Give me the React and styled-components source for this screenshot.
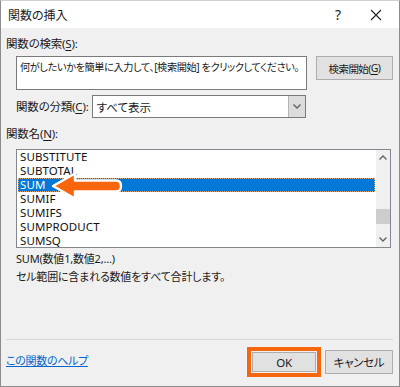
import React from "react";
import styled, { createGlobalStyle } from "styled-components";

const GlobalStyle = createGlobalStyle`
  html, body {
    margin: 0;
    padding: 0;
    background: #ffffff;
  }
  body {
    font-family: "Noto Sans", "Noto Sans CJK JP", sans-serif;
    font-size: 12px;
    color: #1a1a1a;
  }
`;

const ORANGE = "#f7650d";

const Dialog = styled.div`
  width: 400px;
  height: 387px;
  box-sizing: border-box;
  border: 1px solid #8c8c8c;
  border-top-color: #d0d0d0;
  background: #f0f0f0;
  display: flex;
  flex-direction: column;
  font-feature-settings: "palt";
`;

const TitleBar = styled.div`
  height: 27px;
  background: #ffffff;
  display: flex;
  align-items: center;
  padding-left: 7px;
`;

const Title = styled.div`
  flex: 1;
  font-size: 12px;
  color: #1a1a1a;
`;

const TitleButton = styled.div`
  width: ${({ wide }) => (wide ? "46px" : "30px")};
  display: flex;
  justify-content: center;
  align-items: center;
  font-size: 14px;
  color: #222;
`;

const Body = styled.div`
  flex: 1;
  display: flex;
  flex-direction: column;
  padding: 8px 6px 0 5px;
`;

const Label = styled.div`
  font-size: 11.5px;
  height: 16px;
  line-height: 16px;
  letter-spacing: -0.2px;
  white-space: nowrap;
  u {
    text-underline-offset: 2px;
  }
`;

const Indented = styled.div`
  padding-left: 10px;
`;

const SearchRow = styled(Indented)`
  display: flex;
  align-items: flex-start;
  gap: 9px;
  margin-top: 4px;
`;

const SearchBox = styled.div`
  width: 291px;
  height: 34px;
  box-sizing: border-box;
  border: 1px solid #7a7a7a;
  background: #fff;
  padding: 2px 3px;
  font-size: 10.2px;
  line-height: 16px;
  letter-spacing: -0.4px;
  white-space: nowrap;
`;

const Button = styled.div`
  width: ${({ w }) => w}px;
  height: ${({ h }) => h || 24}px;
  box-sizing: border-box;
  border: 1px solid #adadad;
  background: #e1e1e1;
  display: flex;
  align-items: center;
  justify-content: center;
  font-size: ${({ fs }) => fs || 11.5}px;
  letter-spacing: ${({ ls }) => (ls == null ? -0.3 : ls)}px;
  white-space: nowrap;
  color: #1a1a1a;
  u {
    text-underline-offset: 2px;
  }
`;

const CategoryRow = styled(Indented)`
  display: flex;
  align-items: center;
  gap: 3px;
  margin-top: 5px;
`;

const Select = styled.div`
  width: 214px;
  height: 23px;
  box-sizing: border-box;
  border: 1px solid #7a7a7a;
  background: #fff;
  display: flex;
  align-items: stretch;
`;

const SelectValue = styled.div`
  flex: 1;
  display: flex;
  align-items: center;
  padding-left: 4px;
  font-size: 11.5px;
`;

const SelectArrow = styled.div`
  width: 16px;
  background: #dcdcdc;
  border-left: 1px solid #b5b5b5;
  display: flex;
  align-items: center;
  justify-content: center;
`;

const NameLabel = styled(Label)`
  margin-top: 8px;
`;

const ListWrap = styled.div`
  position: relative;
  margin: 7px 0 0 10px;
  width: 375px;
  height: 99px;
  box-sizing: border-box;
  border: 1px solid #828790;
  background: #fff;
  display: flex;
`;

const Items = styled.ul`
  list-style: none;
  margin: 0;
  padding: 0 1px;
  flex: 1;
`;

const Item = styled.li`
  height: 14px;
  line-height: 14px;
  padding-left: 2px;
  font-size: 11.5px;
  letter-spacing: 0.1px;
  background: ${({ selected }) => (selected ? "#0078d7" : "transparent")};
  color: ${({ selected }) => (selected ? "#ffffff" : "#111")};
  outline: ${({ selected }) => (selected ? "1px dotted #d6a77a" : "none")};
  outline-offset: -1px;
`;

const ScrollBar = styled.div`
  width: 14px;
  background: #f0f0f0;
  display: flex;
  flex-direction: column;
  align-items: stretch;
`;

const ScrollArrow = styled.div`
  height: 15px;
  display: flex;
  align-items: center;
  justify-content: center;
`;

const ScrollTrack = styled.div`
  flex: 1;
  display: flex;
  flex-direction: column;
  justify-content: flex-end;
  padding-bottom: 8px;
`;

const Thumb = styled.div`
  height: 15px;
  background: #cdcdcd;
`;

const Pointer = styled.svg`
  position: absolute;
  left: 33px;
  top: 20px;
`;

const Description = styled(Indented)`
  margin-top: 2px;
  font-size: 11px;
  line-height: 18px;
  letter-spacing: -0.2px;
`;

const Spacer = styled.div`
  flex: 1;
`;

const Separator = styled.div`
  height: 1px;
  background: #d7d7d7;
`;

const Footer = styled.div`
  height: 44px;
  display: flex;
  align-items: center;
  padding-bottom: 2px;
`;

const HelpLink = styled.a`
  color: #0066cc;
  font-size: 11px;
  letter-spacing: -0.3px;
  text-decoration: underline;
  margin-top: -4px;
  flex: 1;
`;

const Highlight = styled.div`
  border: 4px solid ${ORANGE};
  padding: 1px;
  margin-right: 4px;
  display: flex;
`;

const Chevron = ({ up }) => (
  <svg width="8" height="5" viewBox="0 0 8 5">
    <path
      d={up ? "M0.5 4.5 L4 1 L7.5 4.5" : "M0.5 0.5 L4 4 L7.5 0.5"}
      fill="none"
      stroke="#606060"
      strokeWidth="1.3"
    />
  </svg>
);

const CloseIcon = () => (
  <svg width="12" height="12" viewBox="0 0 12 12">
    <path d="M1 1 L11 11 M11 1 L1 11" stroke="#222" strokeWidth="1.1" />
  </svg>
);

const items = [
  "SUBSTITUTE",
  "SUBTOTAL",
  "SUM",
  "SUMIF",
  "SUMIFS",
  "SUMPRODUCT",
  "SUMSQ",
];

export default function App() {
  return (
    <>
      <GlobalStyle />
      <Dialog>
        <TitleBar>
          <Title>関数の挿入</Title>
          <TitleButton>?</TitleButton>
          <TitleButton wide>
            <CloseIcon />
          </TitleButton>
        </TitleBar>
        <Body>
          <Label>
            関数の検索(<u>S</u>):
          </Label>
          <SearchRow>
            <SearchBox>
              何がしたいかを簡単に入力して、[検索開始] をクリックしてください。
            </SearchBox>
            <Button w={77} fs={10.5} ls={-0.6}>
              検索開始(<u>G</u>)
            </Button>
          </SearchRow>
          <CategoryRow>
            <Label>
              関数の分類(<u>C</u>):
            </Label>
            <Select>
              <SelectValue>すべて表示</SelectValue>
              <SelectArrow>
                <Chevron />
              </SelectArrow>
            </Select>
          </CategoryRow>
          <NameLabel>
            関数名(<u>N</u>):
          </NameLabel>
          <ListWrap>
            <Items>
              {items.map((name) => (
                <Item key={name} selected={name === "SUM"}>
                  {name}
                </Item>
              ))}
            </Items>
            <ScrollBar>
              <ScrollArrow>
                <Chevron up />
              </ScrollArrow>
              <ScrollTrack>
                <Thumb />
              </ScrollTrack>
              <ScrollArrow>
                <Chevron />
              </ScrollArrow>
            </ScrollBar>
            <Pointer width="74" height="32" viewBox="0 0 74 32">
              <path
                d="M3 16 L25 3.5 L25 10.5 L66 10.5 Q71 10.5 71 16 Q71 21.5 66 21.5 L25 21.5 L25 28.5 Z"
                fill={ORANGE}
                stroke="#ffffff"
                strokeWidth="2.4"
                strokeLinejoin="round"
              />
            </Pointer>
          </ListWrap>
          <Description>
            SUM(数値1,数値2,...)
            <br />
            セル範囲に含まれる数値をすべて合計します。
          </Description>
          <Spacer />
          <Separator />
          <Footer>
            <HelpLink href="#">この関数のヘルプ</HelpLink>
            <Highlight>
              <Button w={64} h={20}>
                OK
              </Button>
            </Highlight>
            <Button w={68}>キャンセル</Button>
          </Footer>
        </Body>
      </Dialog>
    </>
  );
}
